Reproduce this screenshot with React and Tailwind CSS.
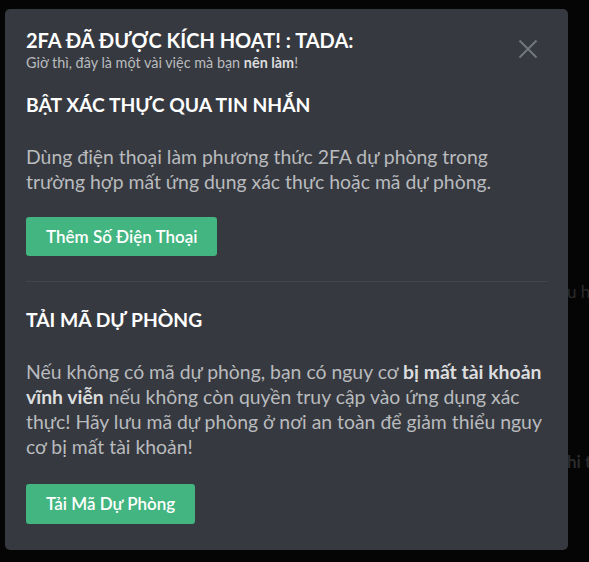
import React from 'react';

const TwoFactorModal = () => {
  return (
    <div className="absolute left-[5px] top-[9px] w-[563px] h-[541px] bg-[#36393f] rounded-[5px] pt-[19px] pl-[21px] pr-[20px]">
      <div className="flex justify-between">
        <div>
          <h2 className="text-[20px] leading-[24px] font-bold text-white">2FA ĐÃ ĐƯỢC KÍCH HOẠT! : TADA:</h2>
          <p className="mt-[2px] text-[14.4px] leading-[18px] text-[#b9bbbe]">
            Giờ thì, đây là một vài việc mà bạn <strong className="font-bold text-[#dcddde]">nên làm</strong>!
          </p>
        </div>
        <button className="mt-[11px] mr-[10px] w-[20px] h-[20px] text-[#72767d]" title="Đóng">
          <svg viewBox="0 0 20 20" className="w-[20px] h-[20px]">
            <path d="M1.5 1.5 L18.5 18.5 M18.5 1.5 L1.5 18.5" stroke="currentColor" strokeWidth="2" fill="none" />
          </svg>
        </button>
      </div>

      <h3 className="mt-[21px] text-[19.3px] leading-[24px] font-bold text-white">BẬT XÁC THỰC QUA TIN NHẮN</h3>
      <p className="mt-[27px] max-w-[520px] text-[19.4px] leading-[25px] text-[#b9bbbe]">
        Dùng điện thoại làm phương thức 2FA dự phòng trong<br />trường hợp mất ứng dụng xác thực hoặc mã dự phòng.
      </p>
      <button className="mt-[23px] h-[39px] px-[20px] rounded-[3px] bg-[#43b581] text-white text-[17px] font-semibold">
        Thêm Số Điện Thoại
      </button>

      <div className="mt-[25px] h-px bg-[#42454b]"></div>

      <h3 className="mt-[26px] text-[19.3px] leading-[24px] font-bold text-white">TẢI MÃ DỰ PHÒNG</h3>
      <p className="mt-[27px] max-w-[520px] text-[19.4px] leading-[25px] text-[#b9bbbe]">
        Nếu không có mã dự phòng, bạn có nguy cơ <strong className="font-bold text-[#dcddde]">bị mất tài khoản vĩnh viễn</strong> nếu không còn quyền truy cập vào ứng dụng xác thực! Hãy lưu mã dự phòng ở nơi an toàn để giảm thiểu nguy cơ bị mất tài khoản!
      </p>
      <button className="mt-[25px] h-[40px] px-[20px] rounded-[3px] bg-[#43b581] text-white text-[17px] font-semibold">
        Tải Mã Dự Phòng
      </button>
    </div>
  );
};

const App = () => {
  return (
    <div className="relative w-[589px] h-[562px] overflow-hidden bg-[#050505]" style={{ fontFamily: 'Lato, "Noto Sans", sans-serif' }}>
      {/* trang phía sau lớp phủ */}
      <div className="pl-[567px] pt-[280px] whitespace-nowrap text-[17px] text-[#2a2b2d]">
        <p className="leading-[24px]">u hỗ trợ</p>
        <p className="mt-[146px] leading-[24px] font-bold">hi tiết</p>
      </div>
      <TwoFactorModal />
    </div>
  );
};

export default App;
